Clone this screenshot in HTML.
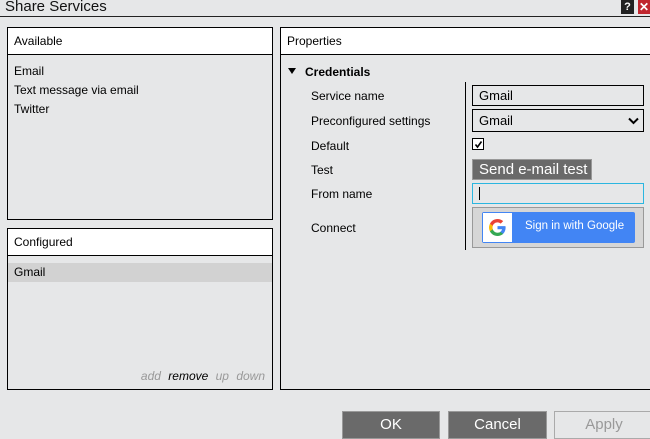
<!DOCTYPE html>
<html><head><style>
*{box-sizing:border-box;margin:0;padding:0}
body{width:650px;height:437px;background:#e6e7e8;font-family:"Liberation Sans",Arial,sans-serif;font-size:12px;color:#000;position:relative;overflow:hidden}
.a{position:absolute}
.panel{position:absolute;border:1px solid #000;background:#e6e7e8}
.hdr{height:27px;background:#fff;border-bottom:1px solid #000;padding:6px 6px;font-size:12px}
.lbl{position:absolute;left:311px;font-size:12px}
.btn{position:absolute;top:411px;height:28px;background:#6a6a6a;color:#fff;font-size:15px;text-align:center;line-height:26px;border:1px solid #999}
</style></head><body>
<div class="a" style="left:0;top:0;width:650px;height:17px;border-bottom:1px solid #222"></div>
<div class="a" style="left:5px;top:-2px;font-size:15px;color:#111">Share Services</div>
<div class="a" style="left:621px;top:0;width:13px;height:14px;background:#222;color:#fff;font-size:11px;font-weight:bold;text-align:center;line-height:14px">?</div>
<div class="a" style="left:638px;top:0;width:12px;height:14px;background:#c0262e;color:#fff;font-size:12px;font-weight:bold;text-align:center;line-height:14px">✕</div>

<div class="panel" style="left:7px;top:27px;width:266px;height:193px">
<div class="hdr">Available</div>
<div style="padding:7px 6px 0;line-height:19px">Email<br>Text message via email<br>Twitter</div>
</div>

<div class="panel" style="left:7px;top:228px;width:266px;height:162px">
<div class="hdr">Configured</div>
<div style="margin-top:7px;height:19px;background:#d2d2d2;padding:2px 6px">Gmail</div>
<div class="a" style="right:7px;top:140px;font-style:italic;color:#999;word-spacing:4px">add <span style="color:#000">remove</span> up down</div>
</div>

<div class="panel" style="left:280px;top:27px;width:380px;height:363px">
<div class="hdr">Properties</div>
</div>
<div class="a" style="left:288px;top:68px;width:0;height:0;border-left:4px solid transparent;border-right:4px solid transparent;border-top:6px solid #000"></div>
<div class="a" style="left:305px;top:65px;font-weight:bold">Credentials</div>
<div class="lbl" style="top:89px">Service name</div>
<div class="lbl" style="top:114px">Preconfigured settings</div>
<div class="lbl" style="top:139px">Default</div>
<div class="lbl" style="top:163px">Test</div>
<div class="lbl" style="top:187px">From name</div>
<div class="lbl" style="top:221px">Connect</div>
<div class="a" style="left:465px;top:82px;width:1px;height:168px;background:#000"></div>

<div class="a" style="left:472px;top:85px;width:172px;height:21px;border:1px solid #000;padding:2px 6px;font-size:13px">Gmail</div>
<div class="a" style="left:472px;top:109px;width:172px;height:23px;border:1px solid #000;padding:3px 6px;font-size:13px">Gmail
<svg class="a" style="right:4px;top:7px" width="11" height="8" viewBox="0 0 11 8"><path d="M1 1.5L5.5 6 10 1.5" stroke="#000" stroke-width="2" fill="none"/></svg></div>
<div class="a" style="left:472px;top:138px;width:12px;height:12px;border:1px solid #000;background:#fff">
<svg class="a" style="left:1px;top:1px" width="9" height="9" viewBox="0 0 9 9"><path d="M1.5 4.5L3.5 7 7.5 1.5" stroke="#000" stroke-width="1.6" fill="none"/></svg></div>
<div class="a" style="left:472px;top:159px;width:120px;height:21px;background:#6a6a6a;border:1px solid #999;color:#fff;font-size:15px;padding:0 6px;line-height:19px;white-space:nowrap">Send e-mail test</div>
<div class="a" style="left:472px;top:183px;width:172px;height:21px;border:1px solid #2bb6e0">
<div class="a" style="left:6px;top:3px;width:1px;height:13px;background:#000"></div></div>
<div class="a" style="left:472px;top:207px;width:172px;height:41px;border:1px solid #999;background:#d6d6d6">
<div class="a" style="left:9px;top:4px;width:153px;height:31px;background:#4285f4;border-radius:2px">
<div class="a" style="left:1px;top:1px;width:29px;height:29px;background:#fff">
<svg class="a" style="left:6px;top:6px" width="17" height="17" viewBox="0 0 18 18">
<path d="M17.6 9.2c0-.6-.1-1.2-.2-1.7H9v3.3h4.8c-.2 1.1-.8 2-1.800 2.7v2.2h2.9c1.7-1.6 2.7-3.900 2.7-6.500z" fill="#4285F4"/>
<path d="M9 18c2.4 0 4.5-.8 6-2.2l-2.9-2.2c-.8.5-1.8.9-3.1.9-2.3 0-4.3-1.6-5-3.7H1v2.3C2.5 16 5.5 18 9 18z" fill="#34A853"/>
<path d="M4 10.8c-.2-.5-.3-1.1-.3-1.8s.1-1.2.3-1.8V5H1C.4 6.2 0 7.6 0 9s.4 2.8 1 4l3-2.2z" fill="#FBBC05"/>
<path d="M9 3.6c1.3 0 2.5.5 3.4 1.3L15 2.3C13.5.9 11.4 0 9 0 5.5 0 2.5 2 1 5l3 2.2c.7-2.100 2.7-3.600 5-3.600z" fill="#EA4335"/></svg></div>
<div class="a" style="left:43px;top:8px;color:#fff;font-size:11.5px">Sign in with Google</div>
</div></div>

<div class="btn" style="left:342px;width:98px">OK</div>
<div class="btn" style="left:448px;width:99px">Cancel</div>
<div class="btn" style="left:554px;width:100px;background:#e6e7e8;color:#999;border-color:#aaa">Apply</div>
</body></html>
